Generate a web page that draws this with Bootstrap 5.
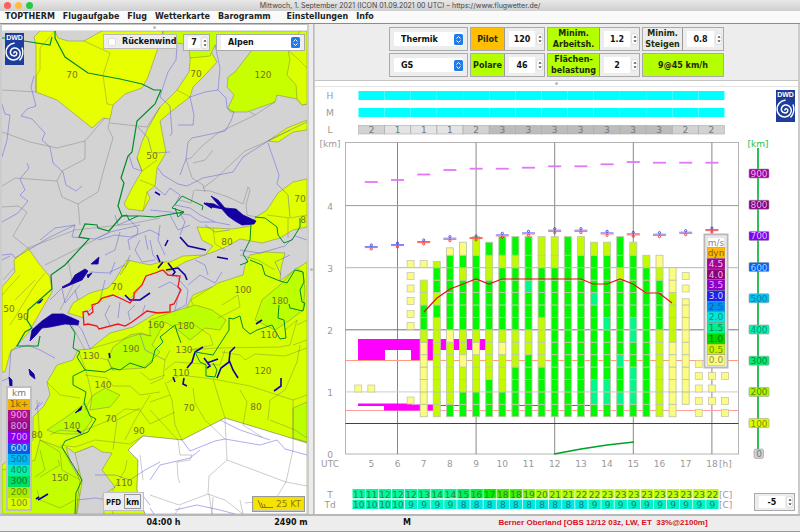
<!DOCTYPE html>
<html lang="de">
<head>
<meta charset="utf-8">
<meta name="viewport" content="width=device-width, initial-scale=1">
<title>TOPTHERM – Flugwetter</title>
<link href="https://cdn.jsdelivr.net/npm/bootstrap@5.3.0/dist/css/bootstrap.min.css" rel="stylesheet">
<style>
body{font-family:"DejaVu Sans",sans-serif;font-size:9px;line-height:11px;background:#ededed;color:#111}
.titlebar{height:11px;background:linear-gradient(#e8e8e8,#cfcfcf);font:7px/11px Inter,sans-serif;color:#444}
.lights{left:4px;top:2px;gap:4px}
.lights i{width:7px;height:7px;border-radius:50%}
.menubar{height:13px;background:#fafafa;border-bottom:1px solid #8c8c8c;padding-left:5px;gap:8px;font-size:8px;line-height:12px;font-weight:bold}
.menubar a{color:#222;text-decoration:none}
.menubar .later{margin-left:8px}
.workspace{display:grid;grid-template-columns:308fr 6px 486fr}
.grip{height:7px;background:#fff;border-bottom:1px solid #e4e4e4;border-top:1px solid #c4c4c4}
.grip i,.vgrip i{width:3px;height:3px;border-radius:50%;background:#bbb}
.vgrip{background:#ececec;border-left:1px solid #ccc;border-right:1px solid #bbb}
.mappane{border-left:2px solid #ccc;border-right:1px solid #ccc}
.chartpane{border-right:2px solid #ccc;border-left:1px solid #ccc}
svg{display:block}
.full{width:100%;height:auto}
.toolbox{height:56px;padding-top:3px}
.toolgrid{display:grid;grid-template-columns:79px 75px 93px 82px;gap:2px;grid-auto-rows:24px}
.tool{border:1px solid #aaa;background:#ededed}
.pushkey{border:0;padding:0;font-weight:bold;font-size:8px;line-height:11px;color:#1c2c08;background:#b4ff00;border-right:1px solid #999}
.pushkey.amber{background:#ffbf00}
.pushkey.plain{background:#ededed}
.k34{width:34px}.k52{width:52px}.k40{width:40px}
.numfield{border:0;background:#fff;text-align:center;padding:0;min-width:0;color:#111;font-weight:bold;font-size:8px;line-height:11px}
.steps{display:flex;flex-direction:column;justify-content:center;align-items:center;flex:none;width:7px;height:12px;border:1px solid #ddd;border-radius:3px;background:#fff;margin:0 1px}
.steps button{display:block;border:0;padding:0;background:none;width:4px;height:5px;line-height:0}
.choice{appearance:none;border:0;background:#fff url("data:image/svg+xml,%3Csvg xmlns='http://www.w3.org/2000/svg' width='9' height='11'%3E%3Crect width='9' height='11' rx='1.5' fill='%231c7df0'/%3E%3Cpath d='M2.5 4.5L4.500 2.500 6.500 4.500M2.500 6.500L4.500 8.500 6.500 6.500' fill='none' stroke='%23fff'/%3E%3C/svg%3E") no-repeat right 0 center;color:#111;font-weight:bold;font-size:8px;line-height:11px;padding:0 12px 0 7px}
.floatbar{left:101px;right:2px;top:3px}
.floatbar .tool{height:17px}
.tickrow{height:15px;width:74px;border:1px solid #bbb;background:#ededed;padding-left:4px;gap:6px;font-weight:bold;font-size:8px}
.tickrow input{appearance:none;flex:none;width:8px;height:8px;border:1px solid #ddd;background:#fff;border-radius:2px;margin:0}
.tickrow input:checked{background:#1c7df0}
.scale{left:4px;bottom:3px;width:26px;border:2px solid #c0c0c0;background:#fff;text-align:center;font-size:9px;line-height:11px}
.pfd{left:101px;bottom:3px;height:19px;border:1px solid #c0c0c0;background:#ededed;padding:0 2px;gap:3px;font:bold 8px/11px "Noto Sans",sans-serif}
.pfd button{border:1px solid #999;background:#ededed;font:inherit;padding:1px}
.windkey{right:2px;bottom:2px;border:2px solid #c8c8c8;outline:1px solid #999;outline-offset:-1px;background:#f6e400;color:#8c7a10;height:16px;width:53px;font-size:9px;padding:0 2px}
.stepbox{right:3px;bottom:3px;width:41px;height:18px}
.statusbar{display:grid;grid-template-columns:100fr 127fr 128fr 104fr 288fr 53fr;height:18px;border-top:2px solid #b8b8b8;border-bottom:1px solid #999;font-size:8px;line-height:14px;font-weight:bold;text-align:center;white-space:pre}
.alertline{color:#d8101c;font-family:"Liberation Sans",sans-serif}
svg text{font-family:"DejaVu Sans",sans-serif;font-size:9px}
.nums text{fill:#77731c;text-anchor:middle}
.region{fill:none;stroke:#555;stroke-opacity:.5;stroke-width:.6}
.land{stroke:#808050;stroke-width:.5}
.river{fill:none;stroke:#6464e0;stroke-width:.7;stroke-opacity:.75}
.lake{fill:#1400a0;stroke:#1400a0;stroke-width:.8}
.inlet{fill:none;stroke:#1400a0;stroke-width:1.6}
.frontier{fill:none;stroke:#008c28;stroke-width:1.2}
</style>
<script src="https://cdn.jsdelivr.net/npm/bootstrap@5.3.0/dist/js/bootstrap.bundle.min.js"></script>
</head>
<body class="d-flex flex-column min-vh-100">
<header class="titlebar position-relative text-center flex-shrink-0">
  <span class="lights position-absolute d-flex"><i style="background:#fc605b"></i><i style="background:#fdbc40"></i><i style="background:#28c840"></i></span>
  Mittwoch, 1. September 2021 (ICON 01.09.2021 00 UTC) – https://www.flugwetter.de/
</header>
<nav class="menubar d-flex flex-shrink-0">
  <a href="#">TOPTHERM</a><a href="#">Flugaufgabe</a><a href="#">Flug</a><a href="#">Wetterkarte</a><a href="#">Barogramm</a><a href="#" class="later">Einstellungen</a><a href="#">Info</a>
</nav>

<main class="workspace flex-grow-1">
  <section class="mappane">
    <div class="grip d-flex justify-content-center align-items-center"><i></i></div>
    <div class="position-relative">
      <svg class="full" viewBox="2 31 305 483" role="img" aria-label="Karte Alpen">
        <rect x="2" y="31" width="305" height="483" fill="#d3d3d3"/>
        <g class="land">
          <path fill="#e8ff00" d="M34 37L40 31H55L58 38 68 41 84 41 100 32 103 31H163L159 45 148 77 142 88 125 94 113 105 110 119 103 118 92 128 57 100 36 92V45z"/>
          <path fill="#e0ff00" d="M191 51L210 50 217 62 205 75 193 87 190 97 173 110 160 121 166 153 157 168 155 186 147 192 150 198 143 211 128 209 124 204 132 188 142 171 137 158 142 142 147 130 160 107 177 90 189 72z"/>
          <path fill="#c8ff00" d="M163 31H307V104L302 105 297 99 277 95 275 102 247 112 230 112 228 108 234 95 227 87 228 77 235 72 252 50 215 45 210 56 190 58 189 45 178 43 163 40z"/>
          <path fill="#dcff00" d="M288 50L300 31H307V104L302 105 297 99 296 85 287 75 290 60z"/>
          <path fill="#e0ff00" d="M268 141L287 128 307 120V130L293 132 278 142z"/>
          <path fill="#e0ff00" d="M307 179L293 182 278 193 267 210 256 217 250 226 233 229 213 228 197 227 202 240 213 246 205 255 183 256 170 262 160 262 150 265 127 260 115 280 108 288 90 293 73 303 68 313 84 318 86 312 98 303 111 297 126 302 145 285 160 270 168 272 185 262 213 252 228 246 240 239 262 243 280 238 293 230 307 227z"/>
          <path fill="#e8ff00" d="M2 287L15 272 14 260 28 248 40 265 50 277 52 292 28 333 10 353 5 372H2z"/>
          <path fill="#d6ff00" d="M250 255L265 252 285 253 281 268 280 281 293 271 307 262V443L225 418 182 440 143 436 128 450 138 460 137 490 145 514H77L78 470 93 446 75 453 66 447 85 514 2 514V465L33 440V417L43 407 50 395 47 382 57 365 73 360 78 350 90 349 110 333 133 327 160 311 172 312 178 320 187 307 193 295 212 287 218 283 243 275 245 265z"/>
          <path fill="#bcff00" d="M150 320L172 312 195 305 212 310 226 320 220 330 205 328 190 340 178 330 165 322 152 345 160 352 150 362 143 368 112 370 108 360 113 347 130 335 141 333 150 336z"/>
          <path fill="#bcff00" d="M92 396L105 388 120 395 110 407 90 410zM47 430L65 418 85 403 92 420 82 434 66 434 55 433z"/>
          <path fill="#bcff00" d="M255 320L262 300 281 284 296 268 303 272 305 290 303 310 290 320 275 330zM293 408L307 402V442L293 438z"/>
          <path fill="#c4ff00" d="M40 440L62 448 80 480 76 514H2V470L35 460z"/>
          <path fill="#d3d3d3" d="M75 453L93 446 102 452 112 453 102 470 115 487 103 495 104 514H77L82 482 78 465z"/>
          <path fill="#fff" d="M143 436L182 440 225 418 307 443V514H145L137 490 138 460 128 450z"/>
          <path fill="#d3d3d3" stroke="none" d="M84 325L83 312 98 303 113 295 134 298 146 276 163 270 180 276 181 290 170 312 147 311 125 326 99 329z"/>
        </g>
        <g class="region">
          <path d="M55 31L40 48 40 70 36 76 36 92M2 90L36 92M84 41L110 53 103 75 107 104 113 105M2 132L30 142 57 148 85 141 105 118M85 141L85 159 62 171 57 181 62 197 78 204 98 192 104 169 113 138 108 128 110 119M2 186L15 178 57 181M2 207L18 206 27 212 13 236 28 248M78 204L80 225M110 123L147 127 160 107M177 90L190 97M137 158L142 171 157 160M250 112L255 115 218 133 202 146 191 158 186 159 192 178 203 185 205 192M203 188L215 179 245 151 268 141 290 130M195 190L210 191 228 197 243 204 248 187 250 190 246 205 247 215 256 217M155 186L140 180M194 190L191 203 179 200M3 280L14 268M10 325L35 285 45 273M68 260L73 285 60 310M143 211L147 192M193 163L205 160 213 150M28 248L75 230 130 224 160 218M45 265L75 250 110 232"/>
          <path d="M90 349L110 343 140 334 152 336M100 358L108 360 113 370M47 382L60 395 80 398M85 375L107 378 113 386 130 386 140 395 160 392M78 350L86 370 92 396 85 410M140 372L150 380 165 375M37 400L40 440 60 452 62 470 80 480M50 435L60 430 80 432 110 420 125 409 140 410 150 424 175 412M60 445L75 447 95 440 130 444 143 436M113 450L117 420 140 408M125 440L135 420 150 395M167 383L180 375 213 379 250 386 293 400 307 395M213 379L225 418 227 460 209 476 208 494 179 505 150 495M227 460L286 482 307 486M293 400L293 450 286 482 275 500 245 503M209 494L212 514M178 440L180 455 192 455 190 460 177 462 178 478 180 483M165 382L172 400 175 425 182 440M193 388L195 403 205 420 225 439M240 390L247 402 243 425 262 437M268 420L270 400 285 390 297 362 300 345M270 420L295 430 307 438M190 350L215 348 280 347 290 345 297 320 285 330M222 352L240 355 245 360 255 354 285 356 307 348M193 305L191 300 212 287M218 318L240 307 238 295 222 305M150 384L163 378 165 360 170 350M240 500L243 514 225 500 208 494M40 477L60 465 58 460M37 490L40 500 60 508 75 500M40 450L45 470 35 477M113 514L110 495 125 470 127 460"/>
          <path d="M255 115L275 102M288 50L297 58 307 68M213 228L215 244 225 250M267 215L290 218 307 215M288 218L288 238M240 255L258 260 275 270M165 370L175 362 220 365 225 350M150 402L170 395M293 345L307 340M297 325L307 320M175 325L190 322 210 335 213 345 190 350M15 300L35 280M70 322L85 350M2 295L20 275M143 480L140 455M178 440L150 410M212 514L213 497M175 514L180 507"/>
        </g>
        <g class="river">
          <path d="M34 76L31 87 36 106 27 109 21 116 32 119 45 133 42 140 50 147 53 163 63 172 66 185 76 191 82 186M2 104L5 114 10 115 7 140 2 157M27 163L29 168 20 179 25 190 20 195 28 201 18 213 2 222M177 45L176 60 168 72 162 90 160 97 170 106 172 133 170 136M215 45L220 68 218 90 205 92 190 97 194 115 193 125 178 125M218 90L226 98 227 108 234 112 231 121 225 131 192 138 188 142 186 159 180 175M307 122L290 130 268 141 243 157 233 172 203 178 187 186 178 184 163 175 158 168M268 143L279 175 277 184 288 195 290 217M138 127L148 138 152 153M155 153L170 152M129 155L133 168 142 171M2 255L12 254 15 258 50 237 75 225 72 237 95 239 110 232 140 225M75 225L55 228 40 240M307 240L295 236 285 246 260 253 240 250"/>
          <path d="M115 215L118 225 130 220 138 229 137 235 128 240 130 250M98 240L115 235 130 237 150 230 160 235M120 232L115 250 105 255M155 187L165 195 170 188 180 195 175 205 190 208 200 215 215 222 230 225M150 210L170 212 190 215 200 222 215 222M160 225L158 240 165 255M170 215L178 230 190 225M180 213L185 222 180 235M205 225L215 232 230 230M140 240L135 250 142 262 155 260M145 235L148 250M130 255L125 268M150 240L153 255 162 265M80 285L65 303 62 288 50 300M75 290L78 300M105 280L100 300 88 312M90 272L108 273 125 265M115 262L110 275M130 260L120 275M110 305L105 315 110 325M120 302L118 318M135 305L128 312 130 320M145 305L142 315M175 275L188 290 186 305 172 312M188 285L200 275 215 283 222 272M195 260L205 265 208 275M2 260L10 256M2 381L9 378 11 350 28 345 40 350 55 358M75 322L82 330 90 349M140 334L145 350 165 360M158 288L170 282 180 288 175 310M40 402L35 410 43 402M281 275L275 262 290 255"/>
          <path d="M182 440L190 451 215 441 225 439 260 445 277 440 285 449 307 455M150 480L160 465 190 458 200 450M220 420L240 430 270 440M175 510L197 505 220 510 235 514M77 500L95 498 110 500M95 475L115 475 130 480 145 470 160 462M140 492L150 505M150 508L154 514"/>
        </g>
        <g class="lake">
          <path d="M30 341L32 330 42 321 52 314 63 314 79 321 78 325 65 324 50 327 42 328 36 335z"/>
          <path d="M62 287L70 283 75 275 85 269 88 271 82 280 70 285 63 288zM87 275L92 273 88 278zM91 264L99 257 98 264zM37 303L43 299 40 303z"/>
          <path d="M211 196L218 200 225 208 236 209 243 215 256 221 254 224 242 225 235 221 228 216 221 208zM206 203L214 204 223 209 212 207z"/>
          <path d="M9 377L12 380 12 388 10 387zM29 369L34 374 35 379 30 375zM75 413L82 406 81 410z"/>
        </g>
        <g class="inlet">
          <path d="M125 295L130 300 140 300 150 293M166 270L178 268 185 275 187 280M168 263L175 272 172 276M180 237L188 246 206 250M203 347L195 352 192 362 187 368M235 347L230 352 229 362 221 368 217 378M229 360L233 370 238 378M281 378L281 386 274 391M184 378L183 384 187 386M204 358L210 366 207 368M207 363L218 359M256 324L262 320M173 377L175 382M48 494L38 500M39 497L36 499M109 353L110 358M160 195L155 192M204 203L212 208M163 262L158 268M157 255L160 262M168 240L165 246M217 257L228 259M77 430L81 433"/>
        </g>
        <g class="frontier">
          <path d="M2 38H8M24 41L50 45 52 37M55 31V38L65 57 88 73 120 79 142 84 154 90 161 90M161 90L155 104 137 121 132 152 128 156 121 178 124 183 118 206 122 216 135 216 141 216 155 217 172 214 184 212M122 216L109 231 98 228 97 225 85 224 79 237 89 239 65 265 51 275 52 289 28 310 27 320 32 328 25 332 17 346 38 346 40 336"/>
          <path stroke-width="1" d="M122 216L127 215 129 220 138 216M184 212L172 208 182 196 203 206 202 210M184 212L178 217 175 208M70 325L75 333 73 348 80 352 77 357 85 370 73 376 73 385 86 392 84 403 90 416 96 419 88 432 65 441 62 447 70 460 82 480 76 493 75 514M85 370L105 372 112 368 120 370 130 363 145 368 152 362 155 350 163 342 160 337 175 325 177 332 181 343M255 217L265 218 277 227 278 235 284 243 292 240 300 227 300 218M251 225L250 240 243 254 248 262 240 265M250 260L262 265 265 275 280 281 287 283 295 270 303 272 304 282 300 290 302 302 305 303 303 311 290 308 289 304M279 305L278 318 284 320 286 338 280 339 272 325 257 330 250 334 243 328 240 316 233 319 229 318 229 330 213 355 195 352M195 352L200 362 206 365 206 376 215 377 217 370 213 363"/>
        </g>
        <path fill="none" stroke="#f01414" stroke-width="1.300" d="M84 325L83 312 87 311 89 315 93 312 92 305 98 303 102 298 113 295 124 300 130 303 134 298 134 293 142 285 146 276 155 273 163 270 168 275 180 276 178 287 181 290 176 300 174 304 170 305 170 312 158 313 147 311 132 322 125 326 118 324 99 329 97 326 88 324z"/>
        <g class="nums">
          <text x="72" y="78">70</text><text x="196" y="77">70</text><text x="263" y="78">120</text><text x="152" y="159">50</text><text x="300" y="202">70</text><text x="303" y="223">8</text><text x="227" y="245">80</text><text x="117" y="290">70</text><text x="9" y="312">50</text><text x="23" y="320">90</text><text x="156" y="328">160</text><text x="186" y="329">180</text><text x="243" y="293">100</text><text x="280" y="304">180</text><text x="269" y="338">110</text><text x="131" y="352">190</text><text x="91" y="359">130</text><text x="184" y="353">130</text><text x="181" y="376">110</text><text x="263" y="374">120</text><text x="103" y="388">140</text><text x="111" y="422">70</text><text x="139" y="434">90</text><text x="189" y="411">70</text><text x="256" y="410">80</text><text x="72" y="429">140</text><text x="37" y="438">80</text><text x="60" y="481">150</text><text x="124" y="486">110</text>
        </g>
        <g class="dwd" transform="translate(5 33)">
          <rect width="19" height="32" fill="#1d3c9c"/>
          <text x="9.500" y="6.500" text-anchor="middle" style="font:bold 7px 'Liberation Sans',sans-serif" fill="#fff">DWD</text>
          <path d="M8.800 20.500a1.500 1.500 0 0 1 3-.5c.2 2-1.500 3.200-3.500 2.800c-2.500-.5-3.600-3-2.600-5.200c1.300-2.700 4.600-3.500 7-1.800c3 2 3.400 6 1.200 8.700c-2.600 3.100-7.200 3.300-10.300.6c-3.300-3-3.300-8.300-.6-11.600c1.600-2 4-3.200 6.600-3.500M17 14.500c1.500 4 1 9.500-2.500 13" fill="none" stroke="#fff" stroke-width="1.500"/>
        </g>
      </svg>
      <div class="floatbar position-absolute d-flex align-items-start justify-content-between">
        <label class="tickrow d-flex align-items-center"><input type="checkbox">Rückenwind</label>
        <div class="tool d-flex" style="width:27px"><span class="spin" data-name="Anzahl" data-value="7"></span></div>
        <div class="tool d-flex px-1" style="width:89px">
          <select class="choice flex-fill" aria-label="Region"><option>Alpen</option></select>
        </div>
      </div>
      <ul id="mapScale" class="scale position-absolute list-unstyled m-0"></ul>
      <div class="pfd position-absolute d-flex align-items-center">PFD <button>km</button></div>
      <button class="windkey position-absolute d-flex align-items-center justify-content-between"><svg width="19" height="10" viewBox="0 0 19 10" fill="none" stroke="#8c7a10"><path d="M2 1L5 8.500H17M5 3.500L7 8.500M8 5L9.500 8.500"/></svg>25 KT</button>
    </div>
  </section>
  <div class="vgrip d-flex align-items-center justify-content-center"><i></i></div>
  <section class="chartpane">
    <div class="toolbox d-flex justify-content-center">
      <div class="toolgrid">
        <div class="tool d-flex p-1"><select class="choice flex-fill" aria-label="Modus"><option>Thermik</option></select></div>
        <div class="tool d-flex align-items-stretch"><button class="pushkey amber k34">Pilot</button><span class="spin" data-name="Pilot" data-value="120"></span></div>
        <div class="tool d-flex align-items-stretch"><button class="pushkey k52">Minim.<br>Arbeitsh.</button><span class="spin" data-name="Arbeitshöhe" data-value="1.2"></span></div>
        <div class="tool d-flex align-items-stretch"><button class="pushkey plain k40">Minim.<br>Steigen</button><span class="spin" data-name="Steigen" data-value="0.8"></span></div>
        <div class="tool d-flex p-1"><select class="choice flex-fill" aria-label="Flugzeug"><option>GS</option></select></div>
        <div class="tool d-flex align-items-stretch"><button class="pushkey k34">Polare</button><span class="spin" data-name="Polare" data-value="46"></span></div>
        <div class="tool d-flex align-items-stretch"><button class="pushkey k52">Flächen-<br>belastung</button><span class="spin" data-name="Flächenbelastung" data-value="2"></span></div>
        <div class="tool d-flex"><button class="pushkey flex-fill border-0">9@45 km/h</button></div>
      </div>
    </div>
    <div class="grip d-flex justify-content-center align-items-center"><i></i></div>
    <div class="position-relative bg-white">
      <svg id="chart" class="full" viewBox="315 87 483 427" role="img" aria-label="Thermikprognose"></svg>
      <div class="tool stepbox position-absolute d-flex"><span class="spin" data-name="Temperatur" data-value="-5"></span></div>
    </div>
  </section>
</main>

<footer class="statusbar flex-shrink-0"><span></span><span>04:00 h</span><span>2490 m</span><span>M</span><span class="alertline">Berner Oberland [OBS 12/12 03z, LW, ET  33%@2100m]</span><span></span></footer>

<script>
const arrow = d => `<svg width="4" height="5" viewBox="0 0 4 5"><path d="${d}" fill="none" stroke="#333" stroke-width=".8"/></svg>`;
document.querySelectorAll('.spin').forEach(s => {
  s.classList.add('d-flex', 'flex-fill', 'align-items-center', 'ps-1');
  s.style.minWidth = 0;
  s.innerHTML = `<input class="numfield flex-fill h-75" size="1" aria-label="${s.dataset.name}" value="${s.dataset.value}"><span class="steps"><button aria-label="mehr">${arrow('M1 4L2 2 3 4')}</button><button aria-label="weniger">${arrow('M1 1L2 3 3 1')}</button></span>`;
});

document.getElementById('mapScale').innerHTML = [
  ['km','#fff','#777'],['1k+','#f0b400','#7c6414'],[900,'#a8108c','#f0a0e8'],[800,'#8c0c8c','#e8a0e8'],[700,'#8c00f0','#dcb0ff'],[600,'#0a5ce8','#c0dcff'],
  [500,'#00b8f4','#107098'],[400,'#00f0a8','#108c64'],[300,'#00e060','#087838'],[200,'#a8f000','#648c10'],[100,'#dcff00','#7c8c10']
].map(([t, b, c]) => `<li style="background:${b};color:${c}">${t}</li>`).join('');

const X = h => 397.5 + 26.2 * (h - 6), Y = k => 454 - 62.1 * k;
const r = (x, y, w, h, f, extra = '') => `<rect x="${x}" y="${y}" width="${w}" height="${h}" fill="${f}" ${extra}/>`;
const l = (x1, y1, x2, y2, c, w = 1) => `<path d="M${x1} ${y1}L${x2} ${y2}" stroke="${c}" stroke-width="${w}"/>`;
const t = (x, y, s, c = '#999', a = 'middle') => `<text x="${x}" y="${y}" fill="${c}" text-anchor="${a}">${s}</text>`;
let o = '';

/* cloud cover rows */
const low = [2,1,1,1,2,3,3,3,3,3,3,3,2,2], greys = {1:'#e4e4e4', 2:'#d2d2d2', 3:'#bcbcbc'};
['H','M','L'].forEach((n, i) => o += t(330, 99 + 17 * i, n));
low.forEach((v, i) => {
  const x = 358.5 + 26.15 * i;
  o += r(x, 91, 26, 9, '#00ffff') + r(x, 108, 26, 9, '#00ffff') + r(x, 125.5, 26, 8.5, greys[v], 'stroke="#aaa" stroke-width=".6"') + t(x + 13, 133, v, '#777');
});

/* axes */
o += `<rect x="345.500" y="142.500" width="393" height="311.500" fill="none" stroke="#b4b4b4"/>`;
[6,9,12,15,18].forEach(h => o += l(X(h), 142.5, X(h), 454, '#888'));
[[1,'#ccc'],[2,'#777'],[3,'#b4b4b4'],[4,'#999']].forEach(([k, c]) => o += l(345.5, Y(k), 738.5, Y(k), c));
[0,1,2,3,4].forEach(k => o += t(330, Y(k) + 4, k));
o += t(330, 147, '[km]') + t(330, 467, 'UTC') + t(719, 467, '[h]', '#999', 'start') + t(330, 498, 'T') + t(330, 508, 'Td');
for (let h = 5; h <= 18; h++) o += t(X(h), 467, h);
o += l(345.5, 360.5, 738.5, 360.5, '#ff9c80') + l(345.5, 410.5, 738.5, 410.5, '#ffa0a0') + l(345.5, 423.5, 738.5, 423.5, '#a01c10', 1.2);

/* cloud layers */
const m = '#ff00ff';
o += r(358, 339, 128, 11, m) + r(358, 350, 27, 10, m) + r(411, 350, 22, 10, m) + r(358, 403.5, 54, 2.5, m) + r(384, 404.5, 49, 6, m);
o += l(433, 405.5, 460, 405.5, m) + l(519, 405.5, 540, 405.5, m) + l(571, 405.5, 592, 405.5, m);

/* thermal columns: cells of 0.2 km above 0.6 km */
const tone = {G:'#00f800', L:'#c4fa00', y:'#fcfc80', T:'#00f88c'};
[[7,'yyyyyyLGGLL',2.8],[7.5,'LLLLLLLLGLGGL',3.1],[8,'GLLLLLyGGGGGGy',3.32],[8.5,'GGLLyLLGGGGLGy',3.41],[9,'GGLLLyLGGGGGGL',3.5],
 [9.5,'GGGLLLLGGGGLLG',3.41],[10,'GGLLLyLGGGGGLG',3.5],[10.5,'GGGGLLLGGGGGLG',3.5],[11,'GGGGGLLGGGTGGG',3.5],[11.5,'GGGGLLLLGGGGLL',3.5],
 [12,'GGGGGGGGGGGGLL',3.5],[12.5,'GGGGGGGGGGGGGG',3.5],[13,'GGGGGGGGGGGGGL',3.5],[13.5,'GTTGGGGGGTGGGL',3.41],[14,'GTTGGGGTGGGGGL',3.41],
 [14.5,'GTGGTGGGGGGLGG',3.5],[15,'GTTTGGTTGGGGGL',3.41],[15.5,'GGGGGGGGGGGGL',3.2],[16,'LLLLLLLGGGGLy',3.2],[16.5,'yyyyyyLLLLyy',3],[17,'.yyyyyyyyy',2.5]
].forEach(([h, s, top]) => [...s].forEach((c, i) => {
  if (c === '.') return;
  const a = 0.6 + 0.2 * i, b = i === s.length - 1 ? top : a + 0.2;
  o += r(X(h) - 3.5, Y(b), 7, (b - a) * 62.1, tone[c], 'stroke="#c0c8a8" stroke-width=".9"');
}));
const bits = {4.5:[388.5], 5:[388.5], 6.5:[264,276,288.5,301,314,326,400.5], 7:[264], 17:[276,288.5], 17.5:[364,376,388.5,401,413], 18:[376,388.5,401], 18.5:[376,401,413]};
for (const h in bits) bits[h].forEach(y => o += r(X(+h) - 3.5, y - 3.5, 7, 7, tone.y, 'stroke="#c8c8b0" stroke-width=".8"'));

/* level markers, 5 h to 18 h */
[182,180,174.5,170,168.7,168.7,167.7,166.3,166.3,164.3,162,162.7,162.7,162.7].forEach((y, i) => o += l(X(i + 5) - 6.5, y, X(i + 5) + 6.5, y, '#e078f8', 1.8));
[247,245,242,238.7,238,235.3,233.3,230.7,230.7,233.3,234.3,234.7,232.7,230].forEach((y, i) => {
  const x = X(i + 5);
  o += l(x - 6.5, y - .5, x + 6.5, y - .5, '#8080ff') + l(x - 6.5, y + .6, x + 6.5, y + .6, '#ff6060');
  o += `<circle cx="${x}" cy="${y - 2}" r="1.100" fill="none" stroke="#3030e0" stroke-width=".8"/><circle cx="${x}" cy="${y + 2}" r="1.100" fill="none" stroke="#f02020" stroke-width=".8"/>`;
});
o += '<path fill="none" stroke="#e01010" stroke-width="1.200" d="M424 312L437 298 450 289 463 284 476 279 489 284 502 279H581L593 284H607L620 279 633 284 646 293H659L672 303"/>';
o += '<path fill="none" stroke="#00a028" stroke-width="1.500" d="M554 454L581 449 607 445 634 442"/>';

/* climb rate key */
o += r(704.5, 234.5, 23, 133, '#fff', 'stroke="#b8b8b8" stroke-width="2"');
[['m/s','#fff','#888'],['dyn','#ffb800','#806010'],['4.5','#a80098','#f0c0f0'],['4.0','#900078','#f0b8e8'],['3.5','#8c00c8','#e0b8ff'],['3.0','#2020e8','#d0d0ff'],['2.5','#0090f0','#085c98'],['2.0','#00e8d8','#088c84'],['1.5','#00f090','#088c50'],['1.0','#00d800','#087808'],['0.5','#c4f400','#748c08'],['0.0','#fcfc80','#909040']
].forEach(([s, b, c], i) => o += r(707, 237 + 10.7 * i, 18, 10.7, b, 'stroke="#888" stroke-width=".4"') + t(716, 245.5 + 10.7 * i, s, c));

/* distance scale */
o += l(758, 148, 758, 454, '#18b848', 1.8) + t(758, 147, '[km]', '#20c050');
[['900','#a000a0','#f0b0f0'],['800','#800080','#e8b0e8'],['700','#8000f0','#dcb8ff'],['600','#0060f8','#a8d0ff'],['500','#00c4f8','#087ca0'],['400','#00f8b0','#08906c'],['300','#00f070','#088440'],['200','#a8f800','#60880c'],['100','#e0fc00','#84900c']
].forEach(([s, b, c], i) => o += r(749, 169 + 31.2 * i, 20, 9, b, 'rx="1" stroke="#999" stroke-width=".6"') + t(759, 177 + 31.2 * i, s, c));
o += r(754, 449, 9.5, 9.5, '#d0d0d0', 'rx="2" stroke="#999" stroke-width=".6"') + t(759, 457, '0', '#777');

/* temperature and dew point */
const T = [11,11,12,12,12,13,14,14,15,16,17,18,18,19,20,21,21,22,22,23,23,23,23,23,23,23,23,22];
const D = [10,10,10,10,9,9,9,9,8,8,8,8,8,8,8,8,8,8,9,9,9,9,9,9,9,9,9,9];
const tc = v => v < 13 ? '#00f8a0' : v < 15 ? '#00f890' : v < 16 ? '#00f060' : v < 17 ? '#00f040' : v < 18 ? '#00f000' : v < 19 ? '#40f000' : v < 20 ? '#80f800' : v < 22 ? '#b0fc00' : '#c4fc00';
T.forEach((v, i) => {
  const x = 352.5 + 13.1 * i;
  o += r(x, 489, 12.4, 9.3, tc(v)) + t(x + 6.2, 497.5, v, '#30803c');
  o += r(x, 499.7, 12.4, 9.3, D[i] > 9 ? '#00f8b0' : D[i] > 8 ? '#00f4c8' : '#00e8e0') + t(x + 6.2, 508, D[i], '#187c74');
});
o += t(719, 498, '[C]', '#999', 'start') + t(719, 508, '[C]', '#999', 'start');
o += `<g transform="translate(776 90)">${document.querySelector('.dwd').innerHTML}</g>`;
document.getElementById('chart').innerHTML = o;
</script>
</body>
</html>
